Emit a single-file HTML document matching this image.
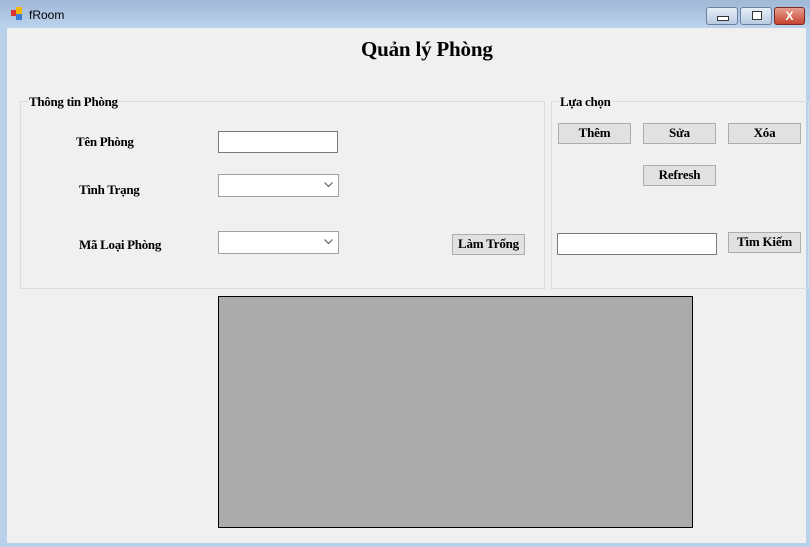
<!DOCTYPE html>
<html><head><meta charset="utf-8"><style>
body{margin:0;width:810px;height:547px;background:#b9d1ea;position:relative;overflow:hidden;font-family:"Liberation Serif",serif;}
.abs{position:absolute}
.tb{left:0;top:0;width:810px;height:28px;background:linear-gradient(#9fb8d6,#bcd3ec)}
.client{left:7px;top:28px;width:799px;height:515px;background:#f0f0f0}
.lbl{font-weight:bold;font-size:13px;color:#000;letter-spacing:-0.3px}
.grp{border:1px solid #dcdcdc;}
.leg{background:#f0f0f0;padding:0 1px;font-weight:bold;font-size:13px;letter-spacing:-0.3px}
.btn{background:#e1e1e1;border:1px solid #adadad;box-sizing:border-box;font-weight:bold;font-size:13px;text-align:center;line-height:18px;letter-spacing:-0.2px}
.in{background:#fff;border:1px solid #7a7a7a;box-sizing:border-box}
.cb{background:#fff;border:1px solid #a0a0a0;box-sizing:border-box}
.wb{top:7px;height:18px;border:1px solid #6d819f;border-radius:3px;box-sizing:border-box;background:linear-gradient(#e6eef8,#b9cbe2)}
</style></head><body>
<div class="abs tb"></div>
<div class="abs" style="left:11px;top:10px;width:6px;height:6px;background:#d33"></div>
<div class="abs" style="left:16px;top:7px;width:6px;height:7px;background:#f5b800"></div>
<div class="abs" style="left:16px;top:14px;width:6px;height:6px;background:#3a7bd5"></div>
<div class="abs" style="left:29px;top:8px;font-family:'Liberation Sans',sans-serif;font-size:12px">fRoom</div>
<div class="abs wb" style="left:706px;width:32px"><div class="abs" style="left:10px;top:8px;width:10px;height:3px;border:1px solid #333;background:#fff"></div></div>
<div class="abs wb" style="left:740px;width:32px"><div class="abs" style="left:11px;top:3px;width:8px;height:7px;border:1px solid #333;background:#fff"></div></div>
<div class="abs wb" style="left:774px;width:31px;background:linear-gradient(#e8a090,#c5432f);border-color:#7a2a20;color:#fff;font:bold 12px 'Liberation Sans';text-align:center;line-height:16px">X</div>
<div class="abs client"></div>
<div class="abs" style="left:361px;top:37px;font-weight:bold;font-size:21px;letter-spacing:-0.2px">Quản lý Phòng</div>

<div class="abs grp" style="left:20px;top:101px;width:523px;height:186px"></div>
<div class="abs leg" style="left:28px;top:94px">Thông tin Phòng</div>
<div class="abs lbl" style="left:76px;top:134px">Tên Phòng</div>
<div class="abs lbl" style="left:79px;top:182px">Tình Trạng</div>
<div class="abs lbl" style="left:79px;top:237px">Mã Loại Phòng</div>
<div class="abs in" style="left:218px;top:131px;width:120px;height:22px"></div>
<div class="abs cb" style="left:218px;top:174px;width:121px;height:23px"><svg class="abs" style="right:5px;top:7px" width="9" height="6"><path d="M0.5 0.5L4.5 4.5L8.5 0.5" fill="none" stroke="#555"/></svg></div>
<div class="abs cb" style="left:218px;top:231px;width:121px;height:23px"><svg class="abs" style="right:5px;top:7px" width="9" height="6"><path d="M0.5 0.5L4.5 4.5L8.5 0.5" fill="none" stroke="#555"/></svg></div>
<div class="abs btn" style="left:452px;top:234px;width:73px;height:21px">Làm Trống</div>

<div class="abs grp" style="left:551px;top:101px;width:256px;height:186px"></div>
<div class="abs leg" style="left:559px;top:94px">Lựa chọn</div>
<div class="abs btn" style="left:558px;top:123px;width:73px;height:21px">Thêm</div>
<div class="abs btn" style="left:643px;top:123px;width:73px;height:21px">Sửa</div>
<div class="abs btn" style="left:728px;top:123px;width:73px;height:21px">Xóa</div>
<div class="abs btn" style="left:643px;top:165px;width:73px;height:21px">Refresh</div>
<div class="abs in" style="left:557px;top:233px;width:160px;height:22px"></div>
<div class="abs btn" style="left:728px;top:232px;width:73px;height:21px">Tìm Kiếm</div>

<div class="abs" style="left:218px;top:296px;width:475px;height:232px;background:#ababab;border:1px solid #000;box-sizing:border-box"></div>
</body></html>
